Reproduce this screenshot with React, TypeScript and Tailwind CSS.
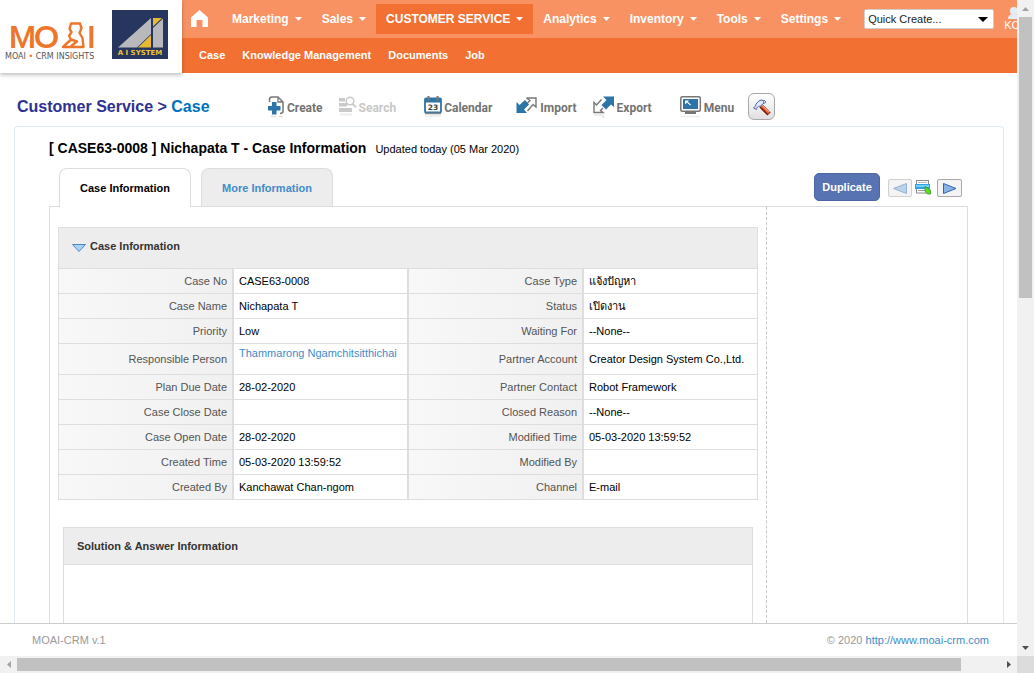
import React from 'react';

const MENU = ['Marketing', 'Sales', 'CUSTOMER SERVICE', 'Analytics', 'Inventory', 'Tools', 'Settings'];
const SUBMENU = ['Case', 'Knowledge Management', 'Documents', 'Job'];

type Field = { label: string; value: string; link?: boolean };

const ROWS: [Field, Field][] = [
  [{ label: 'Case No', value: 'CASE63-0008' }, { label: 'Case Type', value: 'แจ้งปัญหา' }],
  [{ label: 'Case Name', value: 'Nichapata T' }, { label: 'Status', value: 'เปิดงาน' }],
  [{ label: 'Priority', value: 'Low' }, { label: 'Waiting For', value: '--None--' }],
  [
    { label: 'Responsible Person', value: 'Thammarong Ngamchitsitthichai', link: true },
    { label: 'Partner Account', value: 'Creator Design System Co.,Ltd.' },
  ],
  [{ label: 'Plan Due Date', value: '28-02-2020' }, { label: 'Partner Contact', value: 'Robot Framework' }],
  [{ label: 'Case Close Date', value: '' }, { label: 'Closed Reason', value: '--None--' }],
  [{ label: 'Case Open Date', value: '28-02-2020' }, { label: 'Modified Time', value: '05-03-2020 13:59:52' }],
  [{ label: 'Created Time', value: '05-03-2020 13:59:52' }, { label: 'Modified By', value: '' }],
  [{ label: 'Created By', value: 'Kanchawat Chan-ngom' }, { label: 'Channel', value: 'E-mail' }],
];

function MoaiLogo() {
  return (
    <svg width="96" height="50" viewBox="0 0 96 50" role="img" aria-label="MOAI CRM Insights">
      <g fill="#ee762b" fontSize="31">
        <text x="4" y="32" fontFamily="Roboto, sans-serif" fontWeight="500">M</text>
        <text x="29" y="32" fontFamily="Lato, sans-serif" fontWeight="700">O</text>
        <text x="82" y="32" fontFamily="Roboto, sans-serif" fontWeight="500">I</text>
      </g>
      <path
        d="M78.500 31 H58 L66 23.500 L64 20 L66.500 16 L64.500 13 L66 7.500 H75 L76.500 12 L74.500 17 L77.500 22 Z M66 23.500 L72 25.500 L66 30"
        fill="none"
        stroke="#ee762b"
        strokeWidth="2.4"
        strokeLinejoin="round"
      />
      <text x="0" y="43" fill="#555555" fontFamily="DejaVu Sans, sans-serif" fontSize="8">
        MOAI <tspan fill="#ee762b">•</tspan> CRM INSIGHTS
      </text>
    </svg>
  );
}

function AiSystemLogo() {
  return (
    <svg width="56" height="49" viewBox="0 0 56 49" role="img" aria-label="AI System">
      <rect width="56" height="49" fill="#26365e" />
      <path d="M6 37.500 L39 8 V24 L25 37.500 Z" fill="#b7b9bc" />
      <path d="M39 25 V37.500 H26 Z" fill="#e8b935" />
      <path d="M41 8 H50 L41 16.500 Z" fill="#e8b935" />
      <path d="M41 18 L51 8.500 V37.500 H41 Z" fill="#b7b9bc" />
      <text x="28" y="45" textAnchor="middle" fill="#f0c23a" fontFamily="DejaVu Sans, sans-serif" fontWeight="700" fontSize="7">
        A I SYSTEM
      </text>
    </svg>
  );
}

function Caret() {
  return (
    <svg width="7" height="4" viewBox="0 0 7 4" aria-hidden="true">
      <path d="M0 0 H7 L3.500 4 Z" fill="currentColor" />
    </svg>
  );
}

function CreateIcon() {
  return (
    <svg width="18" height="22" viewBox="0 0 18 22" aria-hidden="true">
      <path d="M2.500 6 V3.500 Q2.500 1 5 1 H11 L16 6 V15 Q16 17.500 13 17.500" fill="none" stroke="#777" strokeWidth="1.500" />
      <path d="M11 1 V6 H16" fill="none" stroke="#777" strokeWidth="1.300" />
      <path d="M5 6 H9.500 V10 H13.500 V14.500 H9.500 V18.500 H5 V14.500 H1 V10 H5 Z" fill="#2d74a8" />
      <path d="M4 20.500 H9 M12 20.500 H16" stroke="#e2e2e2" strokeWidth="1.500" />
    </svg>
  );
}

function SearchIcon() {
  return (
    <svg width="18" height="22" viewBox="0 0 18 22" aria-hidden="true">
      <g fill="#c9c9c9">
        <rect x="0" y="2" width="6" height="3.500" />
        <rect x="0" y="7" width="8" height="3.500" />
        <rect x="0" y="12" width="13" height="4" />
      </g>
      <circle cx="11" cy="5" r="3.800" fill="#fff" stroke="#c9c9c9" strokeWidth="1.500" />
      <path d="M13.500 8 L17 11" stroke="#c9c9c9" strokeWidth="2" />
      <path d="M1 18.500 H13" stroke="#ececec" strokeWidth="2" />
    </svg>
  );
}

function CalendarIcon() {
  return (
    <svg width="18" height="22" viewBox="0 0 18 22" aria-hidden="true">
      <rect x="1" y="2.500" width="16" height="14" rx="1" fill="#fff" stroke="#2d74a8" strokeWidth="1.800" />
      <rect x="1" y="2.500" width="16" height="4" fill="#2d74a8" />
      <path d="M4.500 0 V5 M13.500 0 V5" stroke="#777" strokeWidth="2" />
      <text x="9" y="14" textAnchor="middle" fill="#444" fontFamily="DejaVu Sans, sans-serif" fontWeight="700" fontSize="7.500">
        23
      </text>
      <path d="M1 17.500 H17" stroke="#888" strokeWidth="1.500" />
      <path d="M1 20 H17" stroke="#ececec" strokeWidth="1.500" />
    </svg>
  );
}

function ImportIcon() {
  return (
    <svg width="22" height="22" viewBox="0 0 22 22" aria-hidden="true">
      <path d="M10.500 2 H20 V11 L17 8.500 L11.500 15" fill="none" stroke="#777" strokeWidth="1.400" />
      <path d="M10.500 2 L14 4.500 L11 7.500" fill="none" stroke="#777" strokeWidth="1.400" />
      <path d="M0.500 6 L3.500 9 L9 4 L13 8.500 L8 13.500 L11 17 H0.500 Z" fill="#2d74a8" />
    </svg>
  );
}

function ExportIcon() {
  return (
    <svg width="22" height="22" viewBox="0 0 22 22" aria-hidden="true">
      <path d="M8.500 3.500 L3.500 9 L1 6.500 V16.500 H10 L7.500 14.500 L10 12" fill="none" stroke="#777" strokeWidth="1.400" />
      <path d="M10 0.500 H21 V11 L18 8.500 L13 13.500 L8.500 9 L13.500 4 Z" fill="#2d74a8" />
      <path d="M1 19 H11 M9 21 H12" stroke="#dcdcdc" strokeWidth="1.200" />
    </svg>
  );
}

function MonitorIcon() {
  return (
    <svg width="22" height="22" viewBox="0 0 22 22" aria-hidden="true">
      <rect x="0.800" y="0.800" width="19.500" height="14.500" rx="1.500" fill="#fff" stroke="#777" strokeWidth="1.500" />
      <rect x="3" y="3" width="15" height="10" fill="#2d74a8" />
      <path d="M5 4.500 H9 L7.800 5.700 L11 8.700 L10.200 9.500 L7 6.500 L5 8.500 Z" fill="#fff" />
      <path d="M5 17 H16" stroke="#777" strokeWidth="2" />
      <path d="M1 20.500 H20" stroke="#ececec" strokeWidth="1.500" />
    </svg>
  );
}

function HammerIcon() {
  return (
    <svg width="20" height="20" viewBox="0 0 20 20" aria-hidden="true">
      <path d="M9 9 L17 17" stroke="#7a1c10" strokeWidth="4.500" />
      <path d="M9 8 L17 16" stroke="#f0622f" strokeWidth="2.600" />
      <path d="M9.500 7.800 L17 15" stroke="#ffc9a8" strokeWidth="0.800" />
      <path d="M1.500 11 L4.500 12.500 C5 9.500 6.500 9 8 9.500 L12 6 L11.500 3.500 L9 3 C6 4 3.500 7 3.500 9 Z" fill="#dfe8f7" stroke="#4c66a8" strokeWidth="1" />
      <path d="M12 3 L14 5 L12 6.500" fill="#dfe8f7" stroke="#4c66a8" strokeWidth="0.900" />
    </svg>
  );
}

function PrintIcon() {
  return (
    <svg width="16" height="15" viewBox="0 0 16 15" aria-hidden="true">
      <rect x="1.500" y="0.500" width="12" height="4" fill="#fff" stroke="#8c8c8c" />
      <path d="M3 2.500 H12" stroke="#bbb" />
      <rect x="1.500" y="8.500" width="12" height="4.500" fill="#fff" stroke="#8c8c8c" />
      <path d="M3 10.500 H11" stroke="#999" />
      <rect x="0" y="4" width="15" height="5" fill="#2ea5e0" />
      <path d="M1 6 H14" stroke="#8fdcfb" strokeWidth="1.500" />
      <path d="M10 6.500 L15.500 10 V14 H12.500 L10 11 Z" fill="#5fd92c" stroke="#2f9e12" strokeWidth="0.800" />
    </svg>
  );
}

function ToolButton({ icon, label, muted }: { icon: React.ReactNode; label: string; muted?: boolean }) {
  return (
    <button
      type="button"
      disabled={muted}
      className={
        muted
          ? 'flex items-center gap-0.5 font-[Roboto,sans-serif] text-xs font-bold text-[#c8c8c8]'
          : 'flex items-center gap-0.5 font-[Roboto,sans-serif] text-xs font-bold text-[#737373]'
      }
    >
      {icon}
      <span className="pt-0.5">{label}</span>
    </button>
  );
}

function FieldCells({ field }: { field: Field }) {
  return (
    <>
      <th
        scope="row"
        className="border-x border-b border-[#dedede] bg-linear-to-r from-[#f8f8f8] to-[#f0f0f0] px-[5px] py-1 text-right font-normal text-[#545454]"
      >
        {field.label}
      </th>
      {field.link ? (
        <td className="border-x border-b border-[#dedede] px-[5px] pt-px pb-[13px] align-top">
          <a href="#person" className="text-[#428bca]">
            {field.value}
          </a>
        </td>
      ) : (
        <td className="border-x border-b border-[#dedede] px-[5px] py-1">{field.value}</td>
      )}
    </>
  );
}

function Header() {
  return (
    <header className="flex shrink-0">
      <div className="z-10 flex w-[182px] shrink-0 items-start gap-[11px] bg-white pt-2.5 pl-[5px] shadow-[0_2px_4px_rgba(0,0,0,0.25)]">
        <div className="pt-1.5">
          <MoaiLogo />
        </div>
        <AiSystemLogo />
      </div>
      <div className="min-w-0 flex-1 text-white">
        <div className="flex h-[38px] items-center overflow-hidden bg-[#f89263] pl-2">
          <a href="#home" aria-label="Home" className="mr-[13px] shrink-0">
            <svg width="19" height="18" viewBox="0 0 19 18" aria-hidden="true">
              <path d="M9.500 0 L18 7.500 V17 H12.500 V10 H6.500 V17 H1 V7.500 Z" fill="#fff" />
            </svg>
          </a>
          <nav className="flex shrink-0">
            {MENU.map((item) => (
              <a
                key={item}
                href="#menu"
                className={
                  item === 'CUSTOMER SERVICE'
                    ? 'flex h-[30px] items-center gap-1.5 bg-[#f27032] px-2.5 text-xs font-bold'
                    : 'flex h-[30px] items-center gap-1.5 px-2.5 text-xs font-bold'
                }
              >
                {item}
                <Caret />
              </a>
            ))}
          </nav>
          <div className="relative ml-[13px] w-[130px] shrink-0">
            <select
              aria-label="Quick Create"
              className="block h-5 w-full appearance-none rounded-xs border border-[#cfcfcf] bg-white pl-[3px] text-[11px] text-[#222]"
            >
              <option>Quick Create...</option>
            </select>
            <svg className="pointer-events-none absolute top-2 right-1.5" width="10" height="5" viewBox="0 0 10 5" aria-hidden="true">
              <path d="M0 0 H10 L5 5 Z" fill="#000" />
            </svg>
          </div>
          <a href="#user" className="ml-2.5 flex shrink-0 flex-col text-[11px] leading-3">
            <svg className="ml-1" width="16" height="12" viewBox="0 0 16 12" aria-hidden="true">
              <circle cx="6" cy="4" r="4" fill="#e2ecf6" />
              <path d="M0 12 Q0 7 6 7 Q12 7 12 12 Z" fill="#e2ecf6" />
            </svg>
            KC
          </a>
        </div>
        <nav className="flex h-[35px] items-center gap-[17px] bg-[#f27032] pb-0.5 pl-[17px] text-[11px] font-bold">
          {SUBMENU.map((item) => (
            <a key={item} href="#submenu">
              {item}
            </a>
          ))}
        </nav>
      </div>
    </header>
  );
}

export default function App() {
  return (
    <div className="flex h-screen flex-col overflow-hidden bg-white font-['Liberation_Sans',Arial,sans-serif] text-[11px] leading-4 text-black">
      <div className="flex min-h-0 flex-1">
        <div className="flex min-w-0 flex-1 flex-col">
          <Header />

          <div className="flex h-[53px] shrink-0 items-center pt-3.5 pl-[17px]">
            <h1 className="w-[250px] shrink-0 text-base leading-5 font-bold text-[#2e3192]">
              Customer Service &gt; <a href="#case" className="text-[#0071bc]">Case</a>
            </h1>
            <div className="flex items-center gap-7">
              <div className="flex gap-4">
                <ToolButton icon={<CreateIcon />} label="Create" />
                <ToolButton icon={<SearchIcon />} label="Search" muted />
              </div>
              <ToolButton icon={<CalendarIcon />} label="Calendar" />
              <div className="-ml-1 flex gap-4">
                <ToolButton icon={<ImportIcon />} label="Import" />
                <ToolButton icon={<ExportIcon />} label="Export" />
              </div>
              <div className="flex items-center gap-3.5">
                <ToolButton icon={<MonitorIcon />} label="Menu" />
                <button
                  type="button"
                  aria-label="Settings"
                  className="flex size-[27px] items-center justify-center rounded-md border border-[#a8a8a8] bg-linear-to-b from-white to-[#e0e0e0]"
                >
                  <HammerIcon />
                </button>
              </div>
            </div>
          </div>

          <main className="mr-[13px] ml-3.5 flex min-h-0 flex-1 flex-col overflow-hidden rounded-t-sm border border-b-0 border-[#dfe8f0] pt-[11px] pr-[35px] pl-[34px]">
            <div className="flex items-baseline gap-[9px] leading-5">
              <h2 className="text-sm leading-5 font-bold">[ CASE63-0008 ] Nichapata T - Case Information</h2>
              <span>Updated today (05 Mar 2020)</span>
            </div>

            <div className="mt-[9px] flex shrink-0 items-start justify-between pr-1.5 pl-2.5">
              <div className="z-10 -mb-px flex items-start gap-2.5" role="tablist">
                <button
                  type="button"
                  role="tab"
                  aria-selected="true"
                  className="h-[39px] w-[132px] rounded-t-lg border border-b-0 border-[#dddddd] bg-white font-bold"
                >
                  Case Information
                </button>
                <button
                  type="button"
                  role="tab"
                  aria-selected="false"
                  className="h-[38px] w-[132px] rounded-t-lg border border-b-0 border-[#dddddd] bg-[#ededed] font-bold text-[#428bca]"
                >
                  More Information
                </button>
              </div>
              <div className="flex items-center pt-[5px]">
                <button type="button" className="mr-2 h-7 w-[66px] rounded-[5px] border border-[#4c66a4] bg-[#5873b1] font-bold text-white">
                  Duplicate
                </button>
                <button
                  type="button"
                  aria-label="Previous"
                  disabled
                  className="mt-0.5 mr-[3px] flex h-[18px] w-6 items-center justify-center rounded-xs border border-[#d0d0d0] bg-[#f4f4f4]"
                >
                  <svg width="14" height="11" viewBox="0 0 14 11" aria-hidden="true">
                    <path d="M13.500 0.500 V10.500 L0.500 5.500 Z" fill="#bcd2ea" stroke="#92b2d4" />
                  </svg>
                </button>
                <button type="button" aria-label="Print" className="mr-1.5">
                  <PrintIcon />
                </button>
                <button
                  type="button"
                  aria-label="Next"
                  className="mt-0.5 flex h-[18px] w-[25px] items-center justify-center rounded-xs border border-[#a8a8a8] bg-[#f4f4f4]"
                >
                  <svg width="14" height="11" viewBox="0 0 14 11" aria-hidden="true">
                    <path d="M0.500 0.500 V10.500 L13 5.500 Z" fill="#8bb4e6" stroke="#2c67b0" />
                  </svg>
                </button>
              </div>
            </div>

            <div className="flex min-h-0 flex-1 border border-b-0 border-[#dddddd]">
              <div className="min-w-0 flex-1 px-2 pt-5">
                <table className="w-full table-fixed border-separate border-spacing-0">
                  <thead>
                    <tr>
                      <th colSpan={4} className="h-[42px] border border-[#dedede] bg-[#ededed] px-[13px] pb-1 text-left font-bold text-[#333]">
                        <span className="flex items-center gap-1">
                          <svg className="mt-1" width="14" height="8" viewBox="0 0 14 8" aria-hidden="true">
                            <path d="M0.500 0.500 H13.500 L7 7.500 Z" fill="#a9d3fa" stroke="#4c86c8" />
                          </svg>
                          Case Information
                        </span>
                      </th>
                    </tr>
                  </thead>
                  <tbody>
                    {ROWS.map(([left, right]) => (
                      <tr key={left.label} className="h-[25px]">
                        <FieldCells field={left} />
                        <FieldCells field={right} />
                      </tr>
                    ))}
                  </tbody>
                </table>
                <section className="mx-[5px] mt-[27px] border border-[#dedede]">
                  <h3 className="border-b border-[#dedede] bg-[#ededed] px-[13px] py-2.5 font-bold text-[#333]">
                    Solution &amp; Answer Information
                  </h3>
                  <div className="h-40" />
                </section>
              </div>
              <aside className="w-[201px] shrink-0 border-l border-dashed border-[#c8c8c8]" />
            </div>
          </main>

          <footer className="flex h-[33px] shrink-0 items-center justify-between border-t border-[#cccccc] pr-7 pl-8 text-[#999]">
            <span>MOAI-CRM v.1</span>
            <span>
              © 2020 <a href="#moai" className="text-[#428bca]">http://www.moai-crm.com</a>
            </span>
          </footer>
        </div>

        <div className="flex w-[17px] shrink-0 flex-col items-center justify-between bg-[#f1f1f1] pb-1.5" aria-hidden="true">
          <div className="flex w-full flex-col items-center">
            <div className="flex h-[17px] items-center">
              <svg width="7" height="4" viewBox="0 0 7 4">
                <path d="M0 4 H7 L3.500 0 Z" fill="#a3a3a3" />
              </svg>
            </div>
            <div className="h-[281px] w-[13px] bg-[#c1c1c1]" />
          </div>
          <svg width="7" height="4" viewBox="0 0 7 4">
            <path d="M0 0 H7 L3.500 4 Z" fill="#505050" />
          </svg>
        </div>
      </div>

      <div className="flex h-[17px] shrink-0 items-center bg-[#f1f1f1]" aria-hidden="true">
        <div className="flex w-[17px] justify-center">
          <svg width="4" height="7" viewBox="0 0 4 7">
            <path d="M4 0 V7 L0 3.500 Z" fill="#a3a3a3" />
          </svg>
        </div>
        <div className="mr-[39px] h-[13px] flex-1 bg-[#c1c1c1]" />
        <div className="flex w-[17px] justify-center">
          <svg width="4" height="7" viewBox="0 0 4 7">
            <path d="M0 0 V7 L4 3.500 Z" fill="#505050" />
          </svg>
        </div>
        <div className="h-full w-[17px] bg-[#dcdcdc]" />
      </div>
    </div>
  );
}
